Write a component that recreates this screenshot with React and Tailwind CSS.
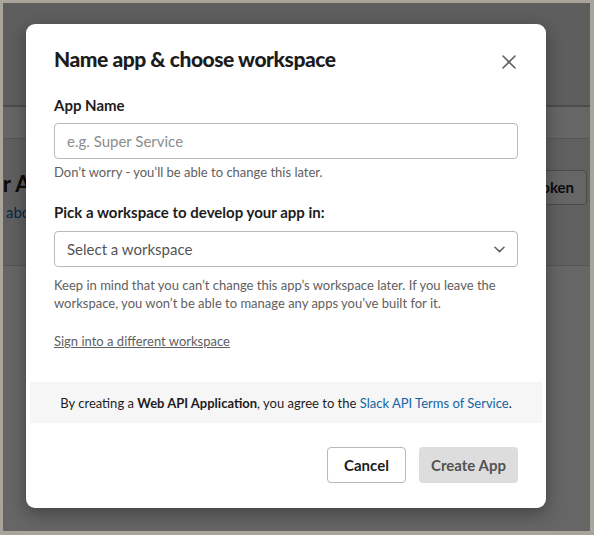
import React from 'react';

function CloseIcon() {
  return (
    <svg width="14" height="14" viewBox="0 0 14 14" fill="none">
      <path d="M1 1L13 13M13 1L1 13" stroke="#616061" strokeWidth="1.6" strokeLinecap="round" />
    </svg>
  );
}

function Chevron() {
  return (
    <svg width="11" height="7" viewBox="0 0 11 7" fill="none">
      <path d="M1 1.2L5.5 5.6L10 1.2" stroke="#616061" strokeWidth="1.5" strokeLinecap="round" strokeLinejoin="round" />
    </svg>
  );
}

function BackgroundPage() {
  return (
    <div className="flex flex-col h-full bg-white">
      <div className="h-[104px] bg-[#eaeaea] border-b-2 border-[#bdbdbd]" />
      <div className="h-[32px] bg-white border-b border-[#d6d6d6]" />
      <div className="h-[127px] bg-[#f1f1f1] border-b border-[#d6d6d6] flex items-start justify-between pt-[31px]">
        <div className="ml-[-37px]">
          <div className="text-[22px] leading-[28px] font-bold text-[#1d1c1d]">Your Apps</div>
          <div className="mt-[3px] ml-[40px] text-[15px] leading-[22px] text-[#1264a3]">about</div>
        </div>
        <div className="mr-[3px] h-[35px] px-3 flex items-center rounded border border-[#bbbbbb] bg-white text-[15px] font-bold text-[#1d1c1d]">
          Generate Token
        </div>
      </div>
      <div className="flex-1 bg-white" />
    </div>
  );
}

function Modal() {
  return (
    <div className="absolute left-[23px] top-[21px] w-[520px] h-[484px] bg-white rounded-[9px] shadow-[0_6px_18px_rgba(0,0,0,0.35)] flex flex-col pt-[20px]">
      <div className="px-7 flex items-center justify-between">
        <h1 className="text-[21px] leading-[28px] font-black tracking-[-0.45px] text-[#1d1c1d]">
          Name app &amp; choose workspace
        </h1>
        <button className="w-[24px] h-[24px] mr-[-3px] mt-[6px] flex items-center justify-center">
          <CloseIcon />
        </button>
      </div>

      <div className="px-7 mt-[20px]">
        <label className="block text-[15px] leading-[22px] font-bold text-[#1d1c1d]">App Name</label>
        <div className="mt-[7px] h-[36px] rounded-[4px] border border-[#b9b9b9] flex items-center px-[12px] text-[15px] text-[#8d8d8d]">
          e.g. Super Service
        </div>
        <p className="mt-[4px] text-[13px] leading-[18px] text-[#616061]">
          Don’t worry - you’ll be able to change this later.
        </p>

        <label className="block mt-[20px] text-[15px] leading-[22px] font-bold text-[#1d1c1d]">
          Pick a workspace to develop your app in:
        </label>
        <div className="mt-[8px] h-[36px] rounded-[4px] border border-[#b9b9b9] flex items-center justify-between pl-[12px] pr-[12px] text-[15px] text-[#555555]">
          <span>Select a workspace</span>
          <Chevron />
        </div>
        <p className="mt-[9px] text-[13px] leading-[18px] text-[#616061]">
          Keep in mind that you can’t change this app’s workspace later. If you leave the workspace, you won’t be able to manage any apps you’ve built for it.
        </p>
        <p className="mt-[20px] text-[13px] leading-[18px] text-[#616061] underline">
          Sign into a different workspace
        </p>
      </div>

      <div className="mx-[4px] mt-[32px] h-[41px] bg-[#f6f6f6] flex items-center justify-center text-[13px] leading-[18px] text-[#1d1c1d]">
        <span>
          By creating a <b className="font-bold">Web API Application</b>, you agree to the{' '}
          <span className="text-[#1264a3]">Slack API Terms of Service</span>.
        </span>
      </div>

      <div className="px-7 mt-[24px] flex justify-end gap-[13px]">
        <button className="w-[79px] h-[36px] rounded-[4px] border border-[#b9b9b9] bg-white text-[15px] font-bold text-[#1d1c1d]">
          Cancel
        </button>
        <button className="w-[99px] h-[36px] rounded-[4px] bg-[#dddddd] text-[15px] font-bold text-[#525252]">
          Create App
        </button>
      </div>
    </div>
  );
}

export default function App() {
  return (
    <div className="w-[594px] h-[535px] bg-[#aaa59a] pt-[3px] pl-[3px] pr-[4px] pb-[4px] font-['Lato','Liberation_Sans',sans-serif]">
      <div className="relative h-full overflow-hidden">
        <BackgroundPage />
        <div className="absolute inset-0 bg-black/60" />
        <Modal />
      </div>
    </div>
  );
}
